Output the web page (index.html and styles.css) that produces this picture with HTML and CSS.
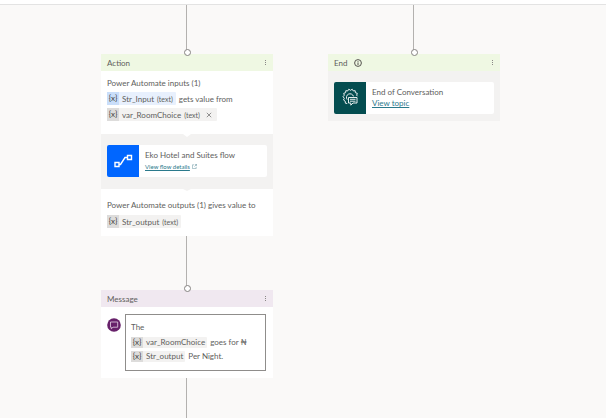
FILE: index.html
```html
<!DOCTYPE html>
<html lang="en">
<head>
<meta charset="utf-8">
<title>Authoring canvas</title>
<link rel="stylesheet" href="styles.css">
</head>
<body>
<div class="topbar"></div>
<main class="canvas">
  <div class="branch">
    <div class="connector connector-in"></div>
    <section class="node">
      <header class="node-head head-green">
        <h2>Action</h2>
        <button class="more" aria-label="Action options"><i></i><i></i><i></i></button>
      </header>
      <div class="inputs">
        <p>Power Automate inputs (1)</p>
        <div class="row"><span class="chip chip-blue"><b>{x}</b><span>Str_Input</span><small>(text)</small></span><span>gets value from</span></div>
        <div class="row"><span class="chip"><b>{x}</b><span>var_RoomChoice</span><small>(text)</small><button class="remove" aria-label="Remove variable"><svg viewBox="0 0 6 6"><path d="M.8.8l4.400 4.400M5.200.8L.8 5.200"/></svg></button></span></div>
      </div>
      <div class="band notched">
        <div class="tile">
          <div class="tile-icon icon-blue">
            <svg viewBox="0 0 32 32"><path d="M8 17.500h4v4H8zM20.500 10.500h4v4h-4zM12 19.500h1.500l4.500-7h2.500"/></svg>
          </div>
          <div class="tile-text">
            <span>Eko Hotel and Suites flow</span>
            <a class="fine" href="#flow">View flow details</a><svg class="external" viewBox="0 0 6 6"><path d="M2.500 1H.5v4.500H5V3.500M3.500.5h2v2M5.500.5L3 3"/></svg>
          </div>
        </div>
      </div>
      <div class="outputs">
        <p>Power Automate outputs (1) gives value to</p>
        <div class="row"><span class="chip"><b>{x}</b><span>Str_output</span><small>(text)</small></span></div>
      </div>
    </section>
    <div class="connector connector-mid"></div>
    <section class="node">
      <header class="node-head head-purple">
        <h2>Message</h2>
        <button class="more" aria-label="Message options"><i></i><i></i><i></i></button>
      </header>
      <div class="message">
        <svg class="avatar" viewBox="0 0 14 14"><circle cx="7" cy="7" r="6.800"/><path d="M3.500 4h7.200v5.200H6L4.300 10.800V9.200h-.8z"/></svg>
        <div class="bubble">
          <p>The</p>
          <div class="row"><span class="chip chip-slim"><b>{x}</b><span>var_RoomChoice</span></span><span>goes for ₦</span></div>
          <div class="row"><span class="chip chip-slim"><b>{x}</b><span>Str_output</span></span><span>Per Night.</span></div>
        </div>
      </div>
    </section>
    <div class="connector connector-out"></div>
  </div>
  <div class="branch">
    <div class="connector connector-in"></div>
    <section class="node">
      <header class="node-head head-green">
        <h2>End</h2>
        <svg class="info" viewBox="0 0 8 8"><circle cx="4" cy="4" r="3.400"/><path d="M4 3.400v2.600M4 2v.8"/></svg>
        <button class="more" aria-label="End options"><i></i><i></i><i></i></button>
      </header>
      <div class="band band-end">
        <div class="tile">
          <div class="tile-icon icon-teal">
            <svg viewBox="0 0 32 32"><path d="M13.200 21.500l-1.800-.300-.2-2-1.700-1.200.8-1.700-1.300-1.600 1.300-1.500-.6-1.900 1.900-.6.2-2 2 .2 1-1.700 1.700 1.100 1.700-1.100 1 1.700 2-.2.2 2 1.900.6-.6 1.900.8 1"/><path d="M13.200 17.600a3.600 3.600 0 1 1 6.300-3.200"/><path class="speech" d="M14.500 15.500h8.500v5.500h-4l-2.200 2.200V21h-2.300z"/><path d="M16 17.300h5.500M16 19.200h5.500"/></svg>
          </div>
          <div class="tile-text">
            <span>End of Conversation</span>
            <a href="#topic">View topic</a>
          </div>
        </div>
      </div>
    </section>
  </div>
</main>
</body>
</html>
```
FILE: styles.css
```css
* { box-sizing: border-box; }
body {
  margin: 0;
  min-height: 100vh;
  display: flex;
  flex-direction: column;
  background: #faf9f8;
  color: #605e5c;
  font: 8px/12px Lato, "Noto Sans", sans-serif;
}
p, h2 { margin: 0; font: inherit; }
button { padding: 0; border: 0; background: none; color: inherit; }
svg { display: block; fill: none; }
.topbar { height: 5px; background: #fff; border-bottom: 1px solid #e3e3e3; }
.canvas {
  flex: 1;
  display: grid;
  grid-template-columns: 172px 172px;
  gap: 55px;
  padding-left: 101px;
}
.branch { display: flex; flex-direction: column; }
.connector {
  position: relative;
  margin-left: calc(50% - 1px);
  width: 1px;
  background: #b3b1af;
}
.connector-in { height: 49px; }
.connector-mid { height: 54px; }
.connector-out { flex: 1; }
.connector-in::after, .connector-mid::after {
  content: "";
  position: absolute;
  left: -2px;
  bottom: -2px;
  width: 5px;
  height: 5px;
  border: 1px solid #858381;
  border-radius: 50%;
  background: #fff;
}
.node { background: #fff; }
.node-head {
  display: flex;
  align-items: center;
  height: 17px;
  padding: 0 7px 0 6px;
}
.head-green { background: #eff8e3; }
.head-purple { background: #f0e8f0; }
.info { width: 8px; height: 8px; margin-left: 7px; stroke: #55534f; stroke-width: 1; }
.more { display: flex; flex-direction: column; gap: 1px; margin-left: auto; }
.more i { width: 1px; height: 1px; background: #8a8886; }
.row { display: flex; align-items: center; gap: 3px; }
.inputs {
  display: grid;
  gap: 3px;
  height: 63px;
  padding: 6px 6px 0;
  align-content: start;
}
.chip {
  display: flex;
  align-items: center;
  height: 13px;
  padding-right: 3px;
  border-radius: 1px;
  background: #f3f2f1;
}
.chip b {
  width: 12px;
  margin-right: 3px;
  background: #dddcdb;
  color: #444;
  font-weight: 400;
  line-height: 13px;
  text-align: center;
}
.chip small { margin-left: 3px; font-size: 7px; }
.chip-blue { background: #e8f0fd; }
.chip-blue b { background: #c9defa; }
.chip-slim { height: 11px; padding-right: 2px; }
.chip-slim b { line-height: 11px; }
.remove { margin: 0 2px 0 6px; }
.remove svg { width: 6px; height: 6px; stroke: #777; stroke-width: .8; }
.band { padding: 11px 6px 12px; background: #f3f2f1; }
.band-end { padding-bottom: 7px; }
.notched { position: relative; }
.notched::before, .notched::after {
  content: "";
  position: absolute;
  left: 50%;
  margin-left: -4px;
  border: 4px solid transparent;
  border-bottom-width: 0;
}
.notched::before { top: 0; border-top-color: #fff; border-top-width: 3px; }
.notched::after { bottom: -2px; border-top-color: #f3f2f1; border-top-width: 2px; }
.tile {
  display: flex;
  height: 32px;
  overflow: hidden;
  border-radius: 2px;
  background: #fff;
}
.tile-icon { width: 32px; height: 32px; stroke: #fff; }
.icon-blue { background: #0066ff; stroke-width: 1.4; }
.icon-teal { background: #044d50; stroke-width: .9; }
.speech { fill: #044d50; }
.tile-text {
  display: flex;
  flex-wrap: wrap;
  align-content: center;
  align-items: center;
  flex: 1;
  padding-left: 6px;
  line-height: 11px;
}
.tile-text span { width: 100%; }
a { color: #2b7a8c; text-decoration: underline; }
.fine { font-size: 6px; }
.external { width: 5px; height: 5px; margin-left: 2px; stroke: #6d9aa5; stroke-width: .7; }
.outputs { display: grid; gap: 4px; padding: 10px 6px 8px; }
.message { display: flex; gap: 4px; padding: 7px 7px 7px 6px; }
.avatar { width: 14px; height: 14px; margin-top: 4px; }
.avatar circle { fill: #67216a; }
.avatar path { stroke: #e6d6e7; stroke-width: .8; }
.bubble {
  display: grid;
  gap: 2px;
  flex: 1;
  height: 57px;
  padding: 5px;
  align-content: start;
  border: 1px solid #8f8d8b;
}
.bubble p { line-height: 14px; }
```
